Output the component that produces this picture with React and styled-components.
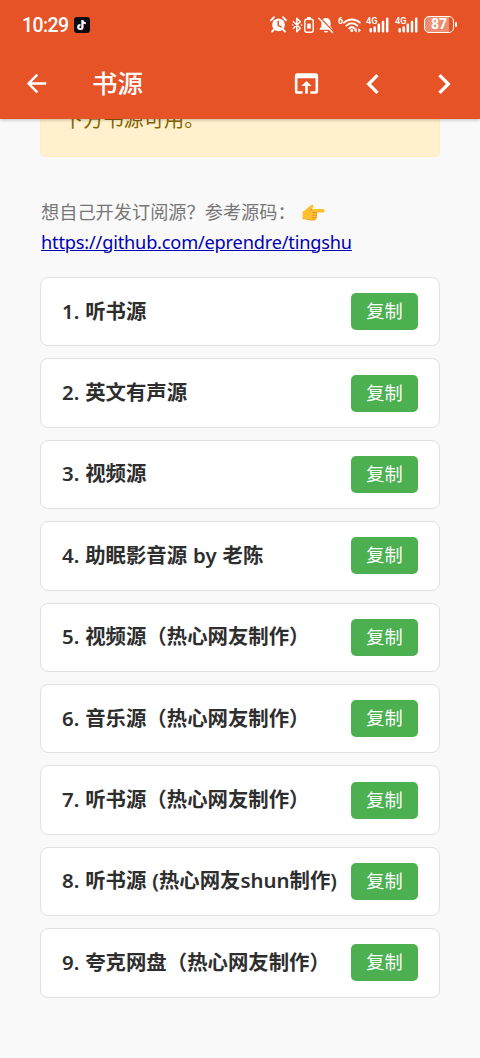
import React from 'react'
import styled, { createGlobalStyle } from 'styled-components'
import { MdArrowBack, MdOpenInBrowser, MdChevronLeft, MdChevronRight } from 'react-icons/md'

const sources = [
  '听书源',
  '英文有声源',
  '视频源',
  '助眠影音源 by 老陈',
  '视频源（热心网友制作）',
  '音乐源（热心网友制作）',
  '听书源（热心网友制作）',
  '听书源 (热心网友shun制作)',
  '夸克网盘（热心网友制作）',
]

const TikTok = () => (
  <svg width="16" height="16" viewBox="0 0 16 16">
    <rect width="16" height="16" rx="3.2" fill="#0d0b12" />
    <g fill="none" strokeWidth="1.7">
      <path d="M8.1 3v6.9a2.1 2.1 0 1 1-2.1-2.1M8.1 3.2c.3 1.700 1.500 2.700 3.200 2.900" stroke="#4fe3e8" />
      <path d="M8.9 3.4v6.9a2.1 2.1 0 1 1-2.1-2.1M8.9 3.6c.3 1.700 1.500 2.700 3.200 2.900" stroke="#f0436b" />
      <path d="M8.5 3.2v6.9A2.1 2.1 0 1 1 6.4 8M8.5 3.4c.3 1.700 1.500 2.700 3.200 2.900" stroke="#fff" />
    </g>
  </svg>
)

const Alarm = () => (
  <svg width="17" height="17" viewBox="0 0 17 17">
    <circle cx="8.5" cy="8.8" r="6.4" fill="#fff" />
    <path d="M1 4.3 4 1.2M16 4.3l-3-3.1M3.7 13.6l-1.6 2M13.3 13.6l1.6 2" stroke="#fff" strokeWidth="1.9" strokeLinecap="round" />
    <path d="M8.2 5.2v4.1l2.9 1.6" fill="none" stroke="#e55327" strokeWidth="1.5" strokeLinecap="round" />
  </svg>
)

const Bluetooth = () => (
  <svg width="22" height="18" viewBox="0 0 22 18">
    <path d="m1 5.3 7.3 7-3.5 3.4V2.3l3.5 3.4-7.3 7" fill="none" stroke="#fff" strokeWidth="1.5" strokeLinejoin="round" />
    <path d="M8.900 9h1.200M.1 9h1.200" stroke="#fff" strokeWidth="1.3" />
    <rect x="15" y="1" width="4" height="2" rx=".6" fill="#fff" />
    <rect x="12.8" y="3.2" width="8.4" height="13" rx="2" fill="none" stroke="#fff" strokeWidth="1.4" />
    <rect x="15.200" y="7.6" width="3.6" height="5" fill="#fff" />
  </svg>
)

const BellOff = () => (
  <svg width="16" height="18" viewBox="0 0 16 18">
    <path d="M8 2c-3 0-4.600 2.300-4.600 5v3.600L1.600 13v.8h12.800V13l-1.800-2.400V7c0-2.700-1.600-5-4.600-5z" fill="#fff" />
    <path d="M6 14.900h4a2 1.700 0 0 1-4 0z" fill="#fff" />
    <path d="m2 1.800 13.500 14" stroke="#e55327" strokeWidth="1.6" />
    <path d="m.8 2.300 13.700 14.200" stroke="#fff" strokeWidth="1.4" strokeLinecap="round" />
  </svg>
)

const Wifi = () => (
  <svg width="24" height="18" viewBox="0 0 24 18">
    <text x="0" y="7.500" fill="#fff" fontSize="9" fontWeight="700" fontFamily="Roboto, sans-serif">6</text>
    <g fill="none" stroke="#fff" strokeWidth="2" strokeLinecap="round">
      <path d="M6 6.600c4.400-4.300 11.400-4.300 15.800 0" />
      <path d="M8.500 9.600c3.100-3 7.700-3 10.800 0" />
      <path d="M11.200 12.400c1.600-1.500 3.800-1.500 5.400 0" />
    </g>
    <circle cx="13.800" cy="14.600" r="1.500" fill="#fff" />
    <path d="M18.700 12v4.600L16 14.300zM20.300 12v4.600l2.700-2.300z" fill="#fff" />
  </svg>
)

const Signal = () => (
  <svg width="24" height="18" viewBox="0 0 24 18">
    <text x="0" y="8" fill="#fff" fontSize="9.500" fontWeight="600" fontFamily="Roboto, sans-serif" textLength="11.500" lengthAdjust="spacingAndGlyphs">4G</text>
    <path d="M4.700 13.200v2M8.700 11.400v3.800M12.800 8.800v6.400M17 6v9.200M21.200 2.800v12.400" stroke="#fff" strokeWidth="2.500" strokeLinecap="round" />
  </svg>
)

const PointRight = () => (
  <svg width="23" height="18" viewBox="0 0 23 18">
    <path d="M.6 7.600C3 6.700 4.700 4.700 6.500 3.100 8.200 1.600 10.200.3 11.200 1c1 .8-.4 2.500-1.400 4.100h11.100c2.300 0 2.300 3.500 0 3.500h-6.200c1 .6 1 2.100-.1 2.600.9.7.7 2-.3 2.500.5.9 0 2.200-1.100 2.400-2.600.4-5.400.3-7.600-.4C3.800 15.100 2.300 14.900.6 15z" fill="#fcc02e" />
    <path d="M14.700 8.600h-4.100M14.600 11.200h-4M14.300 13.700h-3.500M9.800 5.100 8.100 6.500" fill="none" stroke="#e0912b" strokeWidth="1" strokeLinecap="round" />
    <path d="M.6 14.700c1.700-.1 3.200.1 5 .7 2.200.7 5 .8 7.600.4" fill="none" stroke="#e8a02c" strokeWidth=".8" />
  </svg>
)

const App = () => {
  return (
    <Page>
      <GlobalStyle />
      <Header>
        <StatusBar>
          <Clock>10:29</Clock>
          <TikTok />
          <StatusIcons>
            <Alarm />
            <Bluetooth />
            <BellOff />
            <Wifi />
            <Signal />
            <Signal />
            <Battery>87</Battery>
          </StatusIcons>
        </StatusBar>
        <NavBar>
          <NavButton $width={72} $size={29}><MdArrowBack /></NavButton>
          <Title>书源</Title>
          <NavButton $width={60} $size={31}><MdOpenInBrowser /></NavButton>
          <NavButton $width={73} $size={40}><MdChevronLeft /></NavButton>
          <NavButton $width={70} $size={40}><MdChevronRight /></NavButton>
        </NavBar>
      </Header>
      <Content>
        <Notice>下方书源可用。</Notice>
        <Intro>
          <p>想自己开发订阅源？参考源码： <PointRight /></p>
          <Link href="https://github.com/eprendre/tingshu">https://github.com/eprendre/tingshu</Link>
        </Intro>
        <List>
          {sources.map((name, i) => (
            <Item key={name}>
              <h3>{i + 1}. {name}</h3>
              <CopyButton>复制</CopyButton>
            </Item>
          ))}
        </List>
      </Content>
    </Page>
  )
}

export default App

const GlobalStyle = createGlobalStyle`
  *{
    box-sizing: border-box;
    margin: 0;
    padding: 0;
  }
  body{
    background: #f9f9f9;
    font-family: "Noto Sans", "Noto Sans CJK SC", sans-serif;
  }
  svg{
    display: block;
    flex-shrink: 0;
  }
`

const Page = styled.div`
  height: 1058px;
  overflow: hidden;
  background: #f9f9f9;
`

const Header = styled.header`
  position: relative;
  z-index: 1;
  height: 119px;
  background: #e55327;
  color: #fff;
  box-shadow: 0 1px 3px rgba(0, 0, 0, 0.25);
`

const StatusBar = styled.div`
  display: flex;
  align-items: center;
  height: 49px;
  padding: 0 26px 0 22px;
`

const Clock = styled.span`
  width: 52px;
  padding-top: 2px;
  font: 500 19.5px Roboto, sans-serif;
  letter-spacing: -0.6px;
`

const StatusIcons = styled.div`
  display: flex;
  align-items: center;
  gap: 4.3px;
  margin-left: auto;
`

const Battery = styled.div`
  position: relative;
  width: 30px;
  height: 17px;
  margin-left: 1px;
  border: 1.5px solid #fff;
  border-radius: 5px;
  background: linear-gradient(to right, #ee8e70 85%, transparent 85%);
  font: 700 14px/15px Roboto, sans-serif;
  text-align: center;
  &::after{
    content: '';
    position: absolute;
    right: -4px;
    top: 4.5px;
    width: 2px;
    height: 5px;
    border-radius: 1px;
    background: #fff;
  }
`

const NavBar = styled.nav`
  display: flex;
  align-items: center;
  height: 69px;
  padding-right: 1px;
`

const NavButton = styled.div`
  display: flex;
  justify-content: center;
  width: ${(p) => p.$width}px;
  font-size: ${(p) => p.$size}px;
`

const Title = styled.h1`
  flex: 1;
  padding: 0 0 3px 20px;
  font-size: 25.5px;
  font-weight: 500;
  font-family: "Noto Sans CJK SC", sans-serif;
  line-height: 36px;
`

const Content = styled.main`
  padding: 0 40px;
`

const Notice = styled.div`
  height: 80px;
  margin-top: -42px;
  padding: 26px 22px 0;
  border: 1px solid #ffeeba;
  border-radius: 6px;
  background: #fff1cd;
  color: #856404;
  font-size: 20.2px;
  line-height: 30px;
`

const Intro = styled.div`
  margin-top: 41px;
  padding-left: 1px;
  color: #777;
  font-size: 18.2px;
  line-height: 29.5px;
  p{
    display: flex;
    align-items: center;
    white-space: pre;
    gap: 2px;
  }
`

const Link = styled.a`
  display: block;
  color: #0000b4;
  letter-spacing: -0.19px;
  white-space: nowrap;
`

const List = styled.div`
  display: grid;
  gap: 12px;
  margin-top: 20px;
`

const Item = styled.div`
  display: flex;
  align-items: center;
  justify-content: space-between;
  height: 69.4px;
  padding: 0 21px;
  border: 1px solid #e0e0e0;
  border-radius: 8px;
  background: #fff;
  h3{
    padding-bottom: 2px;
    color: #2e2e2e;
    font-size: 20.4px;
    font-weight: 600;
    line-height: 30px;
    word-spacing: 0.6px;
    white-space: nowrap;
  }
`

const CopyButton = styled.button`
  width: 67px;
  height: 37px;
  padding-bottom: 3px;
  flex-shrink: 0;
  border: none;
  border-radius: 5px;
  background: #4caf50;
  color: #fff;
  font-family: inherit;
  font-size: 18.2px;
`
